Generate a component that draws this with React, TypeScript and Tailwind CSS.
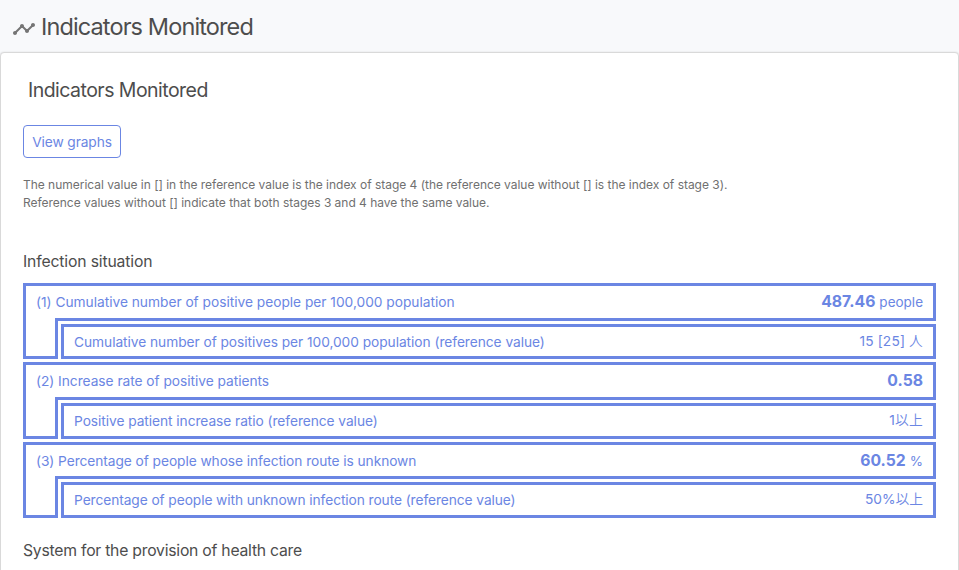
import React from "react";

type Indicator = {
  label: string;
  value: string;
  unit?: string;
  refLabel: string;
  refNumber: string;
  refSuffix: string;
  headHeight: string;
  refHeight: string;
  labelTracking: string;
  refTracking: string;
  refValueTracking: string;
};

const indicators: Indicator[] = [
  {
    label: "(1) Cumulative number of positive people per 100,000 population",
    value: "487.46",
    unit: "people",
    refLabel: "Cumulative number of positives per 100,000 population (reference value)",
    refNumber: "15 [25] ",
    refSuffix: "人",
    headHeight: "h-[38px]",
    refHeight: "h-[35px]",
    labelTracking: "tracking-[-0.02px]",
    refTracking: "tracking-[-0.05px]",
    refValueTracking: "tracking-[0.15px]",
  },
  {
    label: "(2) Increase rate of positive patients",
    value: "0.58",
    refLabel: "Positive patient increase ratio (reference value)",
    refNumber: "1",
    refSuffix: "以上",
    headHeight: "h-[38px]",
    refHeight: "h-[36px]",
    labelTracking: "tracking-[-0.04px]",
    refTracking: "tracking-[-0.06px]",
    refValueTracking: "tracking-[0.2px]",
  },
  {
    label: "(3) Percentage of people whose infection route is unknown",
    value: "60.52",
    unit: "%",
    refLabel: "Percentage of people with unknown infection route (reference value)",
    refNumber: "50%",
    refSuffix: "以上",
    headHeight: "h-[37px]",
    refHeight: "h-[36px]",
    labelTracking: "tracking-[-0.07px]",
    refTracking: "tracking-[-0.08px]",
    refValueTracking: "tracking-[0px]",
  },
];

function IndicatorBox({ item }: { item: Indicator }) {
  return (
    <li>
      <div className={`flex items-center justify-between border-[3px] border-[#6b86e3] px-[10px] ${item.headHeight}`}>
        <span className={item.labelTracking}>{item.label}</span>
        <span className="flex items-baseline gap-[4px] leading-[20px]">
          <strong className="text-[15.75px] leading-[20px] font-bold">{item.value}</strong>
          {item.unit && <span className="text-[13.5px] leading-[18px]">{item.unit}</span>}
        </span>
      </div>
      <div className="flex">
        <div className="relative -mt-[3px] w-[35px] border-x-[3px] border-b-[3px] border-[#6b86e3] bg-white" />
        <div className={`mt-[3px] ml-[3px] flex flex-1 items-center justify-between border-[3px] border-[#6b86e3] px-[10px] ${item.refHeight}`}>
          <span className={item.refTracking}>{item.refLabel}</span>
          <span className={`pb-[2px] whitespace-pre ${item.refValueTracking}`}>
            {item.refNumber}
            <span className="font-[350]">{item.refSuffix}</span>
          </span>
        </div>
      </div>
    </li>
  );
}

export default function App() {
  return (
    <div className="h-[570px] overflow-hidden bg-[#f8f9fb] font-['Inter','Noto_Sans_CJK_JP',sans-serif] text-[#4d4d4d]">
      <header className="flex h-[52px] items-center pl-[12px]">
        <svg className="mt-[6px] size-[24px] shrink-0 text-[#757575]" viewBox="0 0 24 24" fill="currentColor">
          <path d="M23 8c0 1.1-.9 2-2 2-.18 0-.35-.02-.51-.07l-3.56 3.55c.05.16.07.34.07.52 0 1.1-.9 2-2 2s-2-.9-2-2c0-.18.02-.36.07-.52l-2.55-2.55c-.16.05-.34.07-.52.07s-.36-.02-.52-.07l-4.55 4.56c.05.16.07.33.07.51 0 1.1-.9 2-2 2s-2-.9-2-2 .9-2 2-2c.18 0 .35.02.51.07l4.56-4.55C8.02 9.36 8 9.18 8 9c0-1.1.9-2 2-2s2 .9 2 2c0 .18-.02.36-.07.52l2.55 2.55c.16-.05.34-.07.52-.07s.36.02.52.07l3.55-3.56C19.02 8.35 19 8.18 19 8c0-1.1.9-2 2-2s2 .9 2 2z" />
        </svg>
        <h1 className="mt-[2px] ml-[5px] text-[23.5px] leading-[36px] tracking-[-0.88px]">Indicators Monitored</h1>
      </header>
      <main className="h-[530px] rounded-[4px] border border-[#d9d9d9] bg-white px-[22px] pt-[22px] shadow-[0_0_2px_rgba(0,0,0,0.12)]">
        <h2 className="pl-[5px] text-[19.5px] leading-[30px] tracking-[-0.53px]">Indicators Monitored</h2>
        <button className="mt-[20px] flex h-[33px] w-[98px] items-center justify-center rounded-[4px] border border-[#6b86e3] pt-[2px] text-[13.75px] whitespace-nowrap tracking-[-0.1px] text-[#6b86e3]">View graphs</button>
        <p className="mt-[18px] text-[12px] leading-[18px] tracking-[-0.023px] text-[#707070]">
          <span>The numerical value in [] in the reference value is the index of stage 4 (the reference value without [] is the index of stage 3).</span>
          <br />
          <span>Reference values without [] indicate that both stages 3 and 4 have the same value.</span>
        </p>
        <h3 className="mt-[38px] text-[15.75px] leading-[24px] tracking-[-0.16px]">Infection situation</h3>
        <ul className="mt-[9px] flex flex-col gap-[3px] text-[13.75px] leading-[20px] text-[#6b86e3]">
          {indicators.map((item) => (
            <IndicatorBox key={item.label} item={item} />
          ))}
        </ul>
        <h3 className="mt-[21px] text-[15.75px] leading-[24px] tracking-[-0.24px]">System for the provision of health care</h3>
      </main>
    </div>
  );
}
